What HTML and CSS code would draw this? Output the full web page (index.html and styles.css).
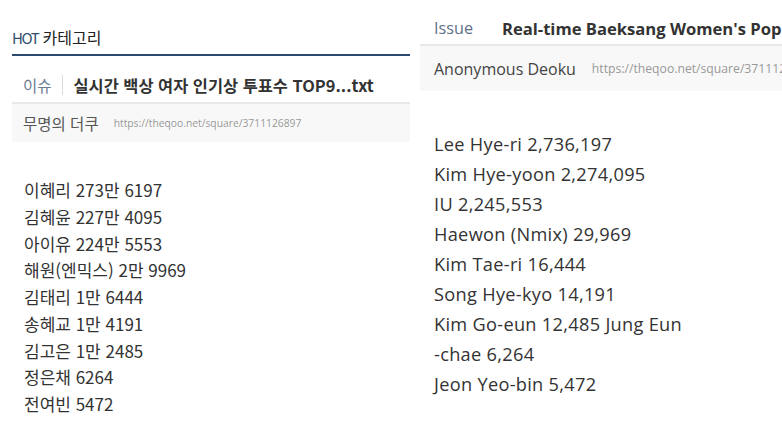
FILE: index.html
```html
<!DOCTYPE html>
<html lang="ko">
<head>
<meta charset="utf-8">
<link rel="stylesheet" href="styles.css">
</head>
<body>
<div class="page">
  <section class="panel-ko">
    <h2 class="cat"><span class="hot">HOT</span> 카테고리</h2>
    <div class="title-row">
      <span class="tag">이슈</span>
      <span class="sep"></span>
      <span class="title">실시간 백상 여자 인기상 투표수 TOP9...txt</span>
    </div>
    <div class="meta">
      <span class="author">무명의 더쿠</span>
      <span class="url">https://theqoo.net/square/3711126897</span>
    </div>
    <ul class="list">
      <li>이혜리 273만 6197</li>
      <li>김혜윤 227만 4095</li>
      <li>아이유 224만 5553</li>
      <li>해원(엔믹스) 2만 9969</li>
      <li>김태리 1만 6444</li>
      <li>송혜교 1만 4191</li>
      <li>김고은 1만 2485</li>
      <li>정은채 6264</li>
      <li>전여빈 5472</li>
    </ul>
  </section>
  <section class="panel-en">
    <div class="title-row">
      <span class="tag">Issue</span>
      <span class="sep"></span>
      <span class="title">Real-time Baeksang Women's Popularity Award Votes TOP9...txt</span>
    </div>
    <div class="meta">
      <span class="author">Anonymous Deoku</span>
      <span class="url">https://theqoo.net/square/3711126897</span>
    </div>
    <ul class="list">
      <li>Lee Hye-ri 2,736,197</li>
      <li>Kim Hye-yoon 2,274,095</li>
      <li>IU 2,245,553</li>
      <li>Haewon (Nmix) 29,969</li>
      <li>Kim Tae-ri 16,444</li>
      <li>Song Hye-kyo 14,191</li>
      <li>Kim Go-eun 12,485 Jung Eun</li>
      <li>-chae 6,264</li>
      <li>Jeon Yeo-bin 5,472</li>
    </ul>
  </section>
</div>
</body>
</html>
```
FILE: styles.css
```css
html, body {
  margin: 0;
  padding: 0;
  background: #ffffff;
}
body {
  width: 782px;
  height: 448px;
  overflow: hidden;
  font-family: "Noto Sans CJK KR", "Noto Sans", sans-serif;
  color: #333;
}
.page {
  display: flex;
  align-items: flex-start;
}
ul.list {
  list-style: none;
  margin: 0;
  padding: 0;
}

/* Korean panel */
.panel-ko {
  width: 398px;
  margin-left: 12px;
  flex: none;
}
.cat {
  margin: 0;
  padding-top: 26px;
  height: 28px;
  line-height: 22px;
  font-size: 16px;
  font-weight: 400;
  color: #222;
  border-bottom: 2px solid #2d4b70;
}
.cat .hot {
  color: #34506f;
  letter-spacing: -1.5px;
  font-size: 15px;
}
.panel-ko .title-row {
  display: flex;
  align-items: center;
  padding: 18px 0 6px 11px;
  height: 22px;
  border-bottom: 2px solid #e8e8e8;
}
.panel-ko .tag {
  font-size: 15.5px;
  color: #6a7d92;
  line-height: 22px;
}
.panel-ko .sep {
  width: 1px;
  height: 20px;
  background: #dcdcdc;
  margin: 0 11px 0 10px;
}
.panel-ko .title {
  font-size: 16.4px;
  font-weight: 700;
  color: #333;
  white-space: nowrap;
  line-height: 22px;
}
.panel-ko .meta {
  background: #f8f8f8;
  height: 38px;
  display: flex;
  align-items: center;
  padding-left: 11px;
}
.panel-ko .author {
  font-size: 15.5px;
  color: #555;
}
.panel-ko .url {
  font-size: 10.3px;
  color: #999;
  margin-left: 15px;
  font-family: "Open Sans", "Noto Sans", sans-serif;
}
.panel-ko .list {
  margin-top: 35px;
  padding-left: 12px;
  font-size: 17px;
  line-height: 26.75px;
  color: #333;
}

/* English panel */
.panel-en {
  flex: 1;
  margin-left: 10px;
  overflow: hidden;
  white-space: nowrap;
  font-family: "Open Sans", "Noto Sans", sans-serif;
}
.panel-en .title-row {
  display: flex;
  align-items: center;
  height: 46px;
  padding-left: 14px;
  padding-top: 12px;
  box-sizing: border-box;
  border-bottom: 2px solid #e8e8e8;
}
.panel-en .tag {
  font-size: 16.2px;
  color: #5d7289;
}
.panel-en .sep {
  width: 1px;
  height: 25px;
  background: #dcdcdc;
  margin: 0 13px 0 16px;
}
.panel-en .title {
  font-size: 16.6px;
  font-weight: 700;
  color: #333;
}
.panel-en .meta {
  background: #f8f8f8;
  height: 45px;
  display: flex;
  align-items: center;
  padding-left: 14px;
}
.panel-en .author {
  font-size: 16px;
  color: #444;
}
.panel-en .url {
  font-size: 12.2px;
  color: #999;
  margin-left: 16px;
}
.panel-en .list {
  margin-top: 38px;
  padding-left: 14px;
  font-size: 18.2px;
  letter-spacing: 0.3px;
  line-height: 30px;
  color: #333;
}
```
